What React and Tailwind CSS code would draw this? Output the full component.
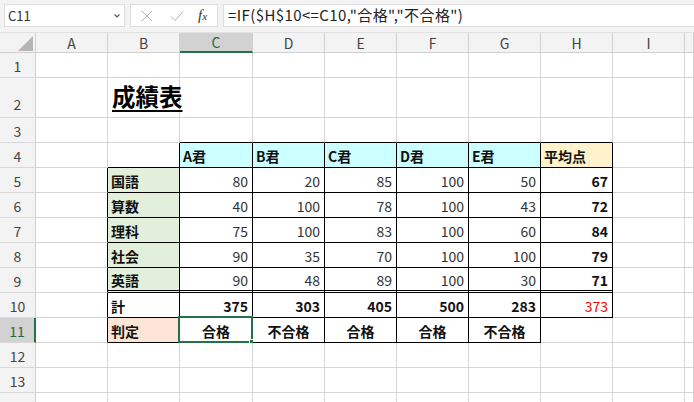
import React from "react";

const COLS = ["A", "B", "C", "D", "E", "F", "G", "H", "I", ""];
const ROWS = [
  [1, 25], [2, 40], [3, 25], [4, 25], [5, 25], [6, 25], [7, 25], [8, 25],
  [9, 25], [10, 25], [11, 25], [12, 25], [13, 25], [14, 25],
];

const data = {
  4: { 2: "A君", 3: "B君", 4: "C君", 5: "D君", 6: "E君", 7: "平均点" },
  5: { 1: "国語", 2: "80", 3: "20", 4: "85", 5: "100", 6: "50", 7: "67" },
  6: { 1: "算数", 2: "40", 3: "100", 4: "78", 5: "100", 6: "43", 7: "72" },
  7: { 1: "理科", 2: "75", 3: "100", 4: "83", 5: "100", 6: "60", 7: "84" },
  8: { 1: "社会", 2: "90", 3: "35", 4: "70", 5: "100", 6: "100", 7: "79" },
  9: { 1: "英語", 2: "90", 3: "48", 4: "89", 5: "100", 6: "30", 7: "71" },
  10: { 1: "計", 2: "375", 3: "303", 4: "405", 5: "500", 6: "283", 7: "373" },
  11: { 1: "判定", 2: "合格", 3: "不合格", 4: "合格", 5: "合格", 6: "不合格" },
};

function bordered(r, c) {
  if (r === 4) return c >= 2 && c <= 7;
  if (r >= 5 && r <= 10) return c >= 1 && c <= 7;
  if (r === 11) return c >= 1 && c <= 6;
  return false;
}

function bgFor(r, c) {
  if (r === 4 && c >= 2 && c <= 6) return "bg-[#ccffff]";
  if (r === 4 && c === 7) return "bg-[#fff2cc]";
  if (r >= 5 && r <= 9 && c === 1) return "bg-[#e2efda]";
  if (r === 11 && c === 1) return "bg-[#fce4d6]";
  return "bg-white";
}

function Cell({ r, c, h }) {
  const width = c === 9 ? "flex-1" : c === 2 ? "w-[73px]" : "w-[72px]";
  const rightBlack = c <= 8 && (bordered(r, c) || bordered(r, c + 1));
  const bottomBlack = bordered(r, c) || bordered(r + 1, c);
  const dbl = r === 9 && c >= 1 && c <= 7;
  const cls = [
    "relative shrink-0 flex items-center px-[3px] text-[14px] leading-none",
    width,
    bgFor(r, c),
    rightBlack ? "border-r border-r-black" : "border-r border-r-[#d4d4d4]",
    dbl
      ? "border-b-[3px] border-double border-b-black"
      : bottomBlack
      ? "border-b border-b-black"
      : "border-b border-b-[#d4d4d4]",
  ];
  const v = data[r] && data[r][c];
  let content = null;
  if (v !== undefined) {
    const isNum = /^\d+$/.test(v);
    if (r === 11) {
      cls.push(c === 1 ? "justify-start" : "justify-center");
      content = <span className="font-bold text-[#111] pt-[2px]">{v}</span>;
    } else if (isNum) {
      cls.push("justify-end pr-[4px]");
      let color = "text-[#333] font-normal";
      if (r === 10 || c === 7) color = "text-[#111] font-bold";
      if (r === 10 && c === 7) color = "text-[#ff0000] font-normal";
      content = <span className={color + " pt-[2px]"}>{v}</span>;
    } else {
      cls.push("justify-start");
      content = <span className="font-bold text-[#111] pt-[2px]">{v}</span>;
    }
  }
  if (r === 2 && c === 1) {
    cls.push("items-end pb-[9px] overflow-visible");
    content = (
      <span className="relative z-10 whitespace-nowrap text-[23.5px] font-bold text-black underline decoration-2 underline-offset-[4px] leading-none pl-[1px]">
        成績表
      </span>
    );
  }
  return (
    <div className={cls.join(" ")} style={{ height: h }}>
      {content}
      {r === 11 && c === 2 && (
        <div className="absolute -left-[2px] -top-[2px] -right-[1px] -bottom-[1px] border-2 border-[#217346] pointer-events-none">
          <div className="absolute -right-[4px] -bottom-[4px] w-[6px] h-[6px] bg-[#217346] border border-white"></div>
        </div>
      )}
    </div>
  );
}

export default function App() {
  const font = { fontFamily: '"Noto Sans CJK JP", "Noto Sans", sans-serif' };
  return (
    <div className="w-[694px] h-[402px] overflow-hidden bg-white" style={font}>
      {/* Formula bar */}
      <div className="h-[33px] bg-[#f3f3f3] flex items-start pt-[4px] pl-[4px] gap-[5px] border-b border-[#e1e1e1]">
        <div className="w-[121px] h-[23px] bg-white border border-[#dedede] flex items-center justify-between pl-[3px] pr-[3px]">
          <span className="text-[13px] text-[#333]">C11</span>
          <svg width="8" height="6" viewBox="0 0 8 6">
            <path d="M1.5 1.5 L4 4 L6.5 1.5" fill="none" stroke="#555" strokeWidth="1.1" />
          </svg>
        </div>
        <div className="w-[88px] h-[23px] bg-white border border-[#dedede] flex items-center pl-[8px]">
          <svg width="14" height="14" viewBox="0 0 14 14" className="ml-[1px]">
            <path d="M2 2 L12 12 M12 2 L2 12" stroke="#b0b0b0" strokeWidth="1" fill="none" />
          </svg>
          <svg width="16" height="14" viewBox="0 0 16 14" className="ml-[15px]">
            <path d="M2 7.5 L6 11.5 L14 2.5" stroke="#b0b0b0" strokeWidth="1" fill="none" />
          </svg>
          <span
            className="ml-[13px] text-[15px] italic text-[#333]"
            style={{ fontFamily: '"Liberation Serif", serif' }}
          >
            f<span className="text-[11px]">x</span>
          </span>
        </div>
        <div className="flex-1 h-[23px] bg-white border border-[#dedede] border-r-0 flex items-center pl-[4px]">
          <span className="text-[15px] tracking-[0.4px] text-[#222] whitespace-nowrap">
            =IF($H$10&lt;=C10,"合格","不合格")
          </span>
        </div>
      </div>
      {/* Column header row */}
      <div className="flex h-[20px] bg-[#f3f3f3]">
        <div className="w-[36px] shrink-0 relative border-r border-b border-[#d0d0d0]">
          <div
            className="absolute right-[2px] bottom-[1px] w-[15px] h-[15px] bg-[#b5b5b5]"
            style={{ clipPath: "polygon(100% 0, 100% 100%, 0 100%)" }}
          ></div>
        </div>
        {COLS.map((l, i) => {
          const w = i === 9 ? "flex-1" : i === 2 ? "w-[73px]" : "w-[72px]";
          const sel = i === 2;
          return (
            <div
              key={i}
              className={
                "shrink-0 flex items-center justify-center text-[14px] leading-none border-r border-[#d0d0d0] " +
                w +
                (sel
                  ? " bg-[#d2d2d2] text-[#1e6b40] border-b-2 border-b-[#217346]"
                  : " text-[#444] border-b border-b-[#d0d0d0]")
              }
            >
              {l}
            </div>
          );
        })}
      </div>
      {/* Rows */}
      {ROWS.map(([r, h]) => (
        <div key={r} className="flex" style={{ height: h }}>
          <div
            className={
              "w-[36px] shrink-0 flex justify-center text-[14px] leading-none border-b border-b-[#d8d8d8] " +
              (r === 2 ? "items-end pb-[6px] " : "items-center pt-[2px] ") +
              (r === 11
                ? "bg-[#d2d2d2] text-[#1e6b40] border-r-2 border-r-[#217346]"
                : "bg-[#f3f3f3] text-[#444] border-r border-r-[#d0d0d0]")
            }
          >
            {r === 14 ? "" : r}
          </div>
          {COLS.map((_, c) => (
            <Cell key={c} r={r} c={c} h={h} />
          ))}
        </div>
      ))}
    </div>
  );
}
